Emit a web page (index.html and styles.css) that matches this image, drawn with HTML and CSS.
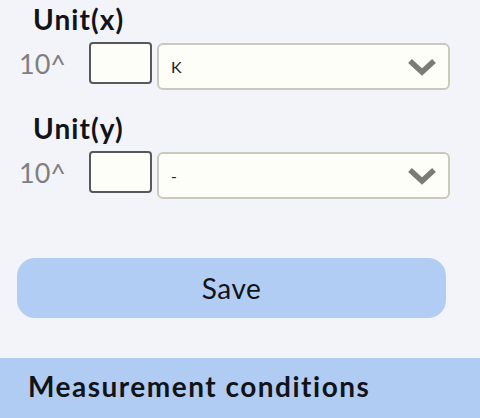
FILE: index.html
```html
<!DOCTYPE html>
<html lang="en">
<head>
<meta charset="utf-8">
<title>Units</title>
<link rel="stylesheet" href="styles.css">
</head>
<body>
<main class="form">
  <section class="unit">
    <h2 class="unit-title">Unit(x)</h2>
    <div class="unit-row">
      <span class="pow">10^</span>
      <input class="exp" type="text" aria-label="exponent x">
      <div class="select">
        <span class="select-value">K</span>
        <svg class="chevron" viewBox="0 0 28 18" width="28" height="18" aria-hidden="true"><polyline points="2,3 14,14 26,3" fill="none" stroke="#7b7b76" stroke-width="5.5"/></svg>
      </div>
    </div>
  </section>
  <section class="unit">
    <h2 class="unit-title">Unit(y)</h2>
    <div class="unit-row">
      <span class="pow">10^</span>
      <input class="exp" type="text" aria-label="exponent y">
      <div class="select">
        <span class="select-value">-</span>
        <svg class="chevron" viewBox="0 0 28 18" width="28" height="18" aria-hidden="true"><polyline points="2,3 14,14 26,3" fill="none" stroke="#7b7b76" stroke-width="5.5"/></svg>
      </div>
    </div>
  </section>
  <button class="save" type="button">Save</button>
</main>
<footer class="section-bar">
  <h2 class="section-title">Measurement conditions</h2>
</footer>
</body>
</html>
```
FILE: styles.css
```css
html, body {
  margin: 0;
  padding: 0;
}
body {
  width: 480px;
  height: 418px;
  overflow: hidden;
  background: #f2f4fa;
  font-family: Lato, "Noto Sans", sans-serif;
  color: #111318;
}
.form {
  display: flex;
  flex-direction: column;
  padding-top: 3px;
}
.unit {
  display: flex;
  flex-direction: column;
  margin-bottom: 22px;
}
.unit-title {
  margin: 0 0 7px 33px;
  font-size: 28px;
  line-height: 32px;
  font-weight: 700;
  letter-spacing: 1.1px;
}
.unit-row {
  display: flex;
  align-items: flex-start;
  padding-left: 19px;
}
.pow {
  width: 70px;
  font-size: 27px;
  line-height: 44px;
  color: #7f7f7f;
}
.exp {
  box-sizing: border-box;
  width: 63px;
  height: 42px;
  margin: 0 5px 0 0;
  border: 2px solid #58585a;
  border-radius: 4px;
  background: #fefef8;
  padding: 0;
}
.select {
  box-sizing: border-box;
  width: 293px;
  height: 47px;
  margin-top: 1px;
  border: 2px solid #c9c9bd;
  border-radius: 6px;
  background: #fefef8;
  display: flex;
  align-items: center;
  justify-content: space-between;
  padding: 0 12px 0 12px;
}
.select-value {
  font-size: 16px;
  color: #222;
}
.chevron {
  display: block;
}
.save {
  box-sizing: border-box;
  margin: 37px 0 0 17px;
  width: 429px;
  height: 60px;
  border: none;
  border-radius: 18px;
  background: #b2cdf3;
  font-family: Lato, "Noto Sans", sans-serif;
  font-size: 28px;
  letter-spacing: 0.5px;
  color: #111318;
  padding: 0;
}
.section-bar {
  margin-top: 40px;
  height: 60px;
  background: #b0ccf3;
  padding-left: 28px;
}
.section-title {
  margin: 0;
  font-size: 28px;
  line-height: 56px;
  font-weight: 700;
  letter-spacing: 1.5px;
}
```
